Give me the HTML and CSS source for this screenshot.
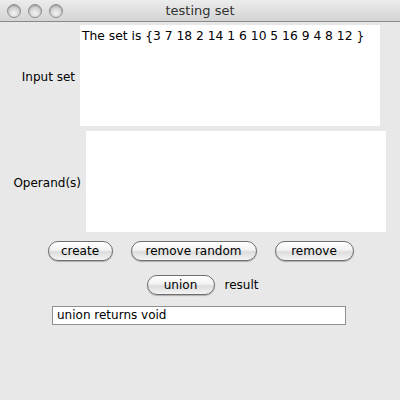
FILE: index.html
```html
<!DOCTYPE html>
<html lang="en">
<head>
    <meta charset="UTF-8">
    <title>testing set</title>
    <link rel="stylesheet" href="styles.css">
</head>
<body>
    <div class="window">
        <div class="titlebar">
            <div class="lights">
                <span class="light"></span>
                <span class="light"></span>
                <span class="light"></span>
            </div>
            <div class="title">testing set</div>
        </div>

        <div class="content">
            <div class="field-row">
                <label class="label label-input">Input set</label>
                <div class="area area-input">The set is {3 7 18 2 14 1 6 10 5 16 9 4 8 12 }</div>
            </div>

            <div class="field-row">
                <label class="label label-operand">Operand(s)</label>
                <div class="area area-operand"></div>
            </div>

            <div class="button-row">
                <button class="btn btn-create">create</button>
                <button class="btn btn-random">remove random</button>
                <button class="btn btn-remove">remove</button>
            </div>

            <div class="union-row">
                <button class="btn btn-union">union</button>
                <span class="result-label">result</span>
            </div>

            <div class="result-field">union returns void</div>
        </div>
    </div>
</body>
</html>
```

FILE: styles.css
```css
* {
    margin: 0;
    padding: 0;
    box-sizing: border-box;
    font-family: 'DejaVu Sans', sans-serif;
}

body {
    width: 400px;
    height: 400px;
    background: #e8e8e8;
    overflow: hidden;
}

.window {
    width: 400px;
    height: 400px;
    background: #e8e8e8;
}

.titlebar {
    height: 22px;
    display: flex;
    align-items: center;
    background: linear-gradient(#ececec, #d4d4d4);
    border-bottom: 1px solid #8a8a8a;
}

.lights {
    display: flex;
    gap: 7px;
    padding-left: 7px;
    width: 63px;
}

.light {
    width: 14px;
    height: 14px;
    border-radius: 50%;
    background: radial-gradient(circle at 50% 70%, #f4f4f4, #c8c8c8 70%);
    border: 1px solid #8e8e8e;
    box-shadow: inset 0 1px 1px rgba(0, 0, 0, 0.25);
}

.title {
    flex: 1;
    text-align: center;
    font-size: 13px;
    color: #333;
    margin-right: 63px;
}

.content {
    padding-top: 3px;
}

.field-row {
    display: flex;
    align-items: center;
    gap: 5px;
    margin-bottom: 5px;
}

.label {
    font-size: 12px;
    color: #000;
    text-align: right;
    padding-top: 3px;
}

.label-input {
    width: 75px;
}

.label-operand {
    width: 81px;
}

.area {
    width: 300px;
    height: 101px;
    background: #fff;
    font-size: 12.3px;
    color: #000;
    padding: 4px 2px;
    line-height: 14px;
    white-space: nowrap;
}

.button-row {
    display: flex;
    justify-content: center;
    gap: 18px;
    margin-top: 9px;
    padding-left: 1px;
}

.btn {
    height: 20px;
    border-radius: 10px;
    border: 1px solid #6e6e6e;
    background: linear-gradient(#ffffff, #f2f2f2 45%, #dcdcdc 55%, #f4f4f4);
    box-shadow: 0 1px 1px rgba(0, 0, 0, 0.25);
    font-size: 12px;
    color: #000;
    line-height: 18px;
}

.btn-create {
    width: 65px;
}

.btn-random {
    width: 126px;
}

.btn-remove {
    width: 79px;
}

.union-row {
    display: flex;
    justify-content: center;
    align-items: center;
    gap: 10px;
    margin-top: 14px;
    padding-left: 5px;
}

.btn-union {
    width: 68px;
}

.result-label {
    font-size: 12px;
    color: #000;
}

.result-field {
    width: 294px;
    height: 19px;
    margin: 11px 0 0 52px;
    background: #fff;
    border: 1px solid #8f8f8f;
    font-size: 12px;
    line-height: 17px;
    padding-left: 4px;
    color: #000;
}
```
